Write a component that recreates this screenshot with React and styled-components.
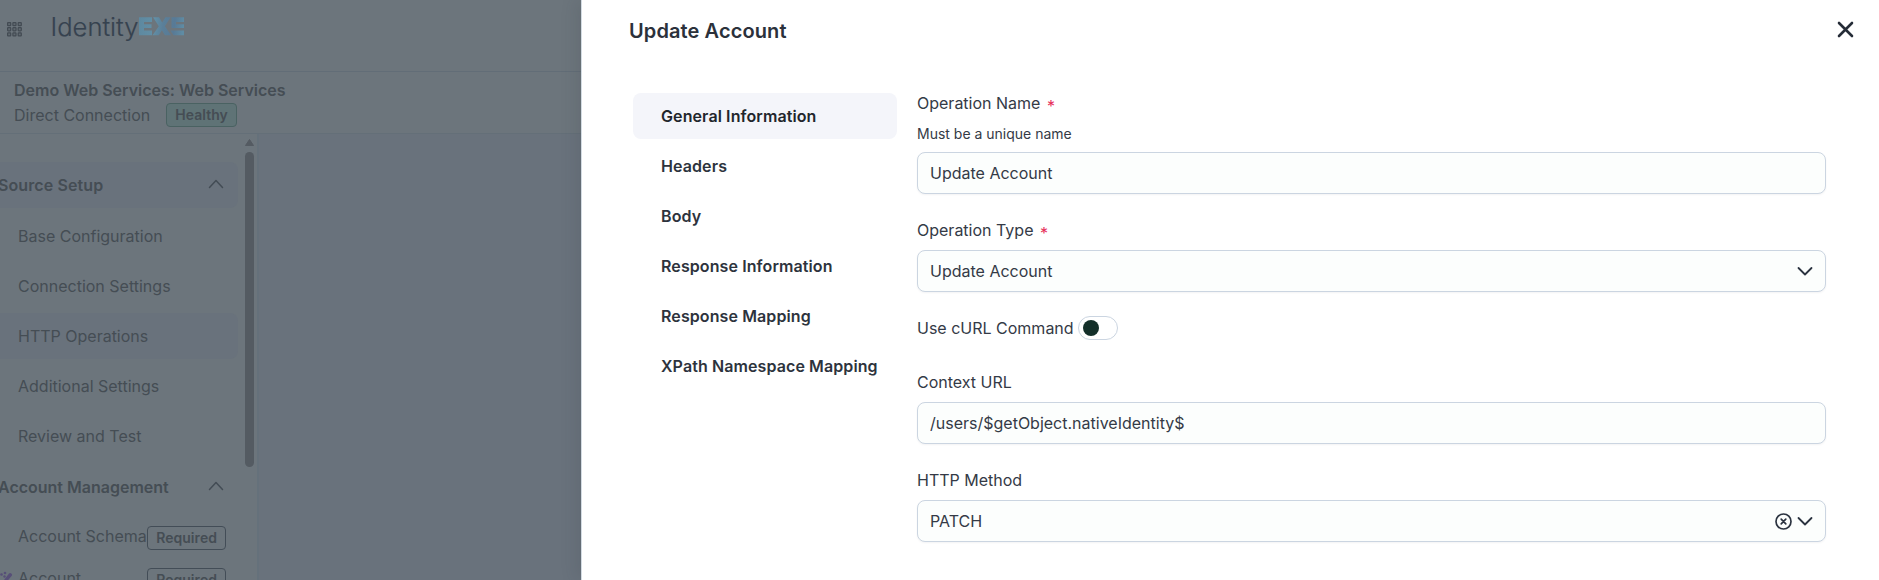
import React from 'react';
import styled, { createGlobalStyle, css } from 'styled-components';

const GlobalStyle = createGlobalStyle`
  * {
    box-sizing: border-box;
  }

  body {
    margin: 0;
    font-family: Inter, 'Liberation Sans', sans-serif;
    font-size: 16px;
    line-height: 24px;
    color: #343a46;
    overflow: hidden;
  }
`;

const Screen = styled.div`
  display: flex;
  width: 100%;
  height: 580px;
  overflow: hidden;
  background: #69727c;
`;

/* Dimmed page behind the drawer */

const Page = styled.div`
  display: flex;
  flex-direction: column;
  width: 581px;
  flex: none;
  color: #454d54;
`;

const TopBar = styled.header`
  display: flex;
  align-items: flex-start;
  height: 72px;
  padding: 16px 0 0 7px;
  background: #6c757c;
  border-bottom: 1px solid #626d77;
`;

const GridIcon = styled.svg`
  width: 15px;
  height: 15px;
  margin-top: 6px;
`;

const Logo = styled.svg`
  width: 136px;
  height: 28px;
  margin-left: 28px;
`;

const SourceHeader = styled.div`
  height: 62px;
  padding: 6px 0 0 14px;
  background: #6c757c;
  border-bottom: 1px solid #646f78;
`;

const SourceName = styled.div`
  font-weight: 600;
`;

const SourceType = styled.div`
  display: flex;
  align-items: center;
  gap: 16px;
  margin-top: 1px;
`;

const Tag = styled.span`
  display: inline-flex;
  align-items: center;
  flex: none;
  height: 24px;
  padding: 0 8px;
  font-size: 14px;
  font-weight: 600;
  letter-spacing: 0.05px;
  border: 1px solid ${({ $healthy }) => ($healthy ? '#4a6262' : '#434d57')};
  border-radius: 4px;
  background: ${({ $healthy }) => ($healthy ? '#5f7376' : 'transparent')};
`;

const PageBody = styled.div`
  display: flex;
  flex: 1;
  min-height: 0;
`;

const Sidebar = styled.nav`
  display: flex;
  width: 259px;
  background: #6c757c;
  border-right: 2px solid #65717b;
  overflow: hidden;
`;

const SidebarList = styled.div`
  width: 238px;
  flex: none;
  padding-top: 28px;
`;

const SectionRow = styled.div`
  display: flex;
  align-items: center;
  justify-content: space-between;
  height: 46px;
  padding-right: 14px;
  margin-bottom: ${({ $active }) => ($active ? '5px' : '3px')};
  font-weight: 600;
  border-radius: 0 8px 8px 0;
  background: ${({ $active }) => ($active ? '#69727c' : 'transparent')};

  span {
    margin-left: -2px;
    letter-spacing: ${({ $active }) => ($active ? '0.1px' : '0')};
  }

  svg {
    margin-bottom: 2px;
  }
`;

const NavRow = styled.div`
  display: flex;
  align-items: center;
  height: ${({ $short }) => ($short ? '30px' : '46px')};
  margin-bottom: ${({ $short }) => ($short ? '0' : '4px')};
  padding: 0 12px 0 18px;
  border-radius: 0 8px 8px 0;
  background: ${({ $active }) => ($active ? '#69727c' : 'transparent')};

  & + ${SectionRow} {
    margin-top: 5px;
  }

  ${Tag} {
    margin: 3px 0 0 auto;
  }
`;

const WandIcon = styled.svg`
  width: 14px;
  height: 14px;
  margin: 0 5px 0 -19px;
`;

const Scrollbar = styled.div`
  display: flex;
  flex-direction: column;
  align-items: center;
  width: 9px;
  margin-left: 7px;
  padding-top: 5px;
`;

const ScrollArrow = styled.svg`
  width: 9px;
  height: 7px;
`;

const ScrollThumb = styled.div`
  width: 9px;
  height: 315px;
  margin-top: 6px;
  border-radius: 5px;
  background: #545b62;
`;

/* Drawer */

const Drawer = styled.section`
  position: relative;
  flex: 1;
  min-width: 0;
  background: #fff;
  border-left: 1px solid #d3dbe2;
  box-shadow: -4px 0 16px rgba(50, 58, 66, 0.14);
`;

const DrawerHeader = styled.div`
  display: flex;
  align-items: center;
  justify-content: space-between;
  height: 62px;
  padding: 0 25px 0 47px;
`;

const DrawerTitle = styled.h2`
  margin: 0;
  font-size: 20px;
  line-height: 28px;
  font-weight: 600;
  letter-spacing: 0.1px;
  color: #2b313b;
`;

const CloseButton = styled.button`
  display: flex;
  padding: 0;
  margin-top: -3px;
  border: 0;
  background: none;
  cursor: pointer;
`;

const DrawerBody = styled.div`
  display: flex;
  gap: 20px;
  padding: 31px 53px 0 51px;
`;

const Tabs = styled.div`
  display: flex;
  flex-direction: column;
  gap: 4px;
  width: 264px;
  flex: none;
`;

const Tab = styled.button`
  height: 46px;
  padding: 0 0 0 28px;
  border: 0;
  border-radius: 8px;
  font: inherit;
  font-weight: 600;
  letter-spacing: 0.1px;
  text-align: left;
  white-space: nowrap;
  color: ${({ $active }) => ($active ? '#22262c' : '#2d333d')};
  background: ${({ $active }) => ($active ? '#f4f5fa' : 'transparent')};
  cursor: pointer;
`;

const Form = styled.div`
  flex: 1;
  min-width: 0;
  margin-top: -2px;
`;

const Field = styled.div`
  margin-bottom: 24px;
`;

const Label = styled.label`
  display: block;
  height: 24px;
  margin-bottom: 8px;
`;

const Required = styled.span`
  display: inline-block;
  margin-left: 2px;
  line-height: 16px;
  vertical-align: -3px;
  color: #e62e58;
`;

const Hint = styled.div`
  margin-bottom: 8px;
  font-size: 14px;
  line-height: 21px;
`;

const control = css`
  width: 100%;
  height: 42px;
  padding: 0 12px;
  border: 1px solid #cbd5e1;
  border-radius: 8px;
  font: inherit;
  color: #343a46;
  background: #fcfefd;
  box-shadow: 0 1px 2px rgba(16, 24, 40, 0.05);
`;

const Input = styled.input`
  ${control}
  display: block;
  outline: none;
`;

const Select = styled.div`
  ${control}
  display: flex;
  align-items: center;
  gap: 5px;

  span {
    flex: 1;
  }
`;

const SwitchRow = styled.div`
  display: flex;
  align-items: center;
  gap: 4px;
  height: 24px;
  margin-bottom: 30px;
`;

const Switch = styled.button`
  display: flex;
  align-items: center;
  width: 40px;
  height: 24px;
  padding: 0 4px;
  border: 1px solid #cbd5e1;
  border-radius: 12px;
  background: #fff;
`;

const Knob = styled.span`
  width: 16px;
  height: 16px;
  border-radius: 50%;
  background: #132f29;
`;

const Chevron = ({ up, color = '#2b3340' }) => (
  <svg width="16" height="10" viewBox="0 0 16 10" fill="none" stroke={color} strokeWidth={up ? 1.5 : 1.8} strokeLinecap="round" strokeLinejoin="round">
    <path d={up ? 'M1.5 8.5 8 1.5 14.5 8.5' : 'M1.5 2 8 8.5 14.5 2'} />
  </svg>
);

const BrandLogo = () => (
  <Logo viewBox="0 0 136 28">
    <defs>
      <linearGradient id="brand" gradientUnits="userSpaceOnUse" x1="89" y1="0" x2="134" y2="6">
        <stop offset="0" stopColor="#5d889f" />
        <stop offset="0.35" stopColor="#628fa6" />
        <stop offset="0.55" stopColor="#5a7f99" />
        <stop offset="0.8" stopColor="#587a96" />
        <stop offset="1" stopColor="#5f8ca4" />
      </linearGradient>
    </defs>
    <text x="0.5" y="20" fontFamily="Inter, sans-serif" fontSize="25" fontWeight="300" fill="#36424f" stroke="#36424f" strokeWidth="0.2" textLength="88" lengthAdjust="spacingAndGlyphs">Identity</text>
    <g fill="url(#brand)">
      <path d="M89 1.300h13v4.700H94v2.300h7.500v3.700H94v2.600h8v4.700H89z" />
      <path d="M103 1.300h6l3.200 5.200 3.200-5.200h5.200l-5.700 8.900 6.200 9.100h-6.200l-3-5-3.100 5h-6.300l6.300-9.100z" />
      <path d="M121.500 1.300H134v4.700h-8v2.300h8v3.700h-12.500z" />
      <path d="M120.500 14.600H134v4.700h-10.500z" />
    </g>
  </Logo>
);

const sourceItems = ['Base Configuration', 'Connection Settings', 'HTTP Operations', 'Additional Settings', 'Review and Test'];

const tabs = [
  'General Information',
  'Headers',
  'Body',
  'Response Information',
  'Response Mapping',
  'XPath Namespace Mapping',
];

const App = () => {
  const [activeTab, setActiveTab] = React.useState(tabs[0]);

  return (
    <>
      <GlobalStyle />
      <Screen>
        <Page>
          <TopBar>
            <GridIcon viewBox="0 0 15 15" fill="#606970" stroke="#434b53" strokeWidth="1.2">
              {[0, 1, 2].map((row) =>
                [0, 1, 2].map((col) => (
                  <rect key={`${row}-${col}`} x={0.6 + col * 5.3} y={0.6 + row * 5.1} width="3.1" height="3.1" rx="0.5" />
                ))
              )}
            </GridIcon>
            <BrandLogo />
          </TopBar>
          <SourceHeader>
            <SourceName>Demo Web Services: Web Services</SourceName>
            <SourceType>
              Direct Connection
              <Tag $healthy>Healthy</Tag>
            </SourceType>
          </SourceHeader>
          <PageBody>
            <Sidebar>
              <SidebarList>
                <SectionRow $active>
                  <span>Source Setup</span>
                  <Chevron up color="#434c55" />
                </SectionRow>
                {sourceItems.map((item) => (
                  <NavRow key={item} $active={item === 'HTTP Operations'}>
                    {item}
                  </NavRow>
                ))}
                <SectionRow>
                  <span>Account Management</span>
                  <Chevron up color="#434c55" />
                </SectionRow>
                <NavRow>
                  Account Schema
                  <Tag>Required</Tag>
                </NavRow>
                <NavRow $short>
                  <WandIcon viewBox="0 0 14 14" fill="#574f78">
                    <path d="M2 13 10 2.500a1.800 1.800 0 0 1 2.800 2.200L5 14z" />
                    <circle cx="6" cy="2" r="1.300" />
                    <circle cx="2.500" cy="3.500" r="1.300" />
                    <circle cx="5.500" cy="5.500" r="1.200" />
                  </WandIcon>
                  Account
                  <Tag>Required</Tag>
                </NavRow>
              </SidebarList>
              <Scrollbar>
                <ScrollArrow viewBox="0 0 9 7">
                  <path d="M4.500.5 8.500 6.500h-8z" fill="#545b62" stroke="#545b62" strokeLinejoin="round" />
                </ScrollArrow>
                <ScrollThumb />
              </Scrollbar>
            </Sidebar>
          </PageBody>
        </Page>

        <Drawer>
          <DrawerHeader>
            <DrawerTitle>Update Account</DrawerTitle>
            <CloseButton aria-label="Close">
              <svg width="17" height="17" viewBox="0 0 17 17" stroke="#252c37" strokeWidth="2.6" strokeLinecap="round">
                <path d="M2 2l13 13M15 2 2 15" />
              </svg>
            </CloseButton>
          </DrawerHeader>
          <DrawerBody>
            <Tabs>
              {tabs.map((tab) => (
                <Tab key={tab} $active={tab === activeTab} onClick={() => setActiveTab(tab)}>
                  {tab}
                </Tab>
              ))}
            </Tabs>
            <Form>
              <Field>
                <Label>
                  Operation Name <Required>*</Required>
                </Label>
                <Hint>Must be a unique name</Hint>
                <Input defaultValue="Update Account" />
              </Field>
              <Field>
                <Label>
                  Operation Type <Required>*</Required>
                </Label>
                <Select>
                  <span>Update Account</span>
                  <Chevron />
                </Select>
              </Field>
              <SwitchRow>
                Use cURL Command
                <Switch role="switch" aria-checked="false">
                  <Knob />
                </Switch>
              </SwitchRow>
              <Field>
                <Label>Context URL</Label>
                <Input defaultValue="/users/$getObject.nativeIdentity$" />
              </Field>
              <Field>
                <Label>HTTP Method</Label>
                <Select>
                  <span>PATCH</span>
                  <svg width="17" height="17" viewBox="0 0 17 17" fill="none" stroke="#2b3340" strokeWidth="1.7" strokeLinecap="round">
                    <circle cx="8.500" cy="8.500" r="7.500" />
                    <path d="M6.200 6.200l4.600 4.600M10.800 6.200l-4.600 4.600" />
                  </svg>
                  <Chevron />
                </Select>
              </Field>
            </Form>
          </DrawerBody>
        </Drawer>
      </Screen>
    </>
  );
};

export default App;
